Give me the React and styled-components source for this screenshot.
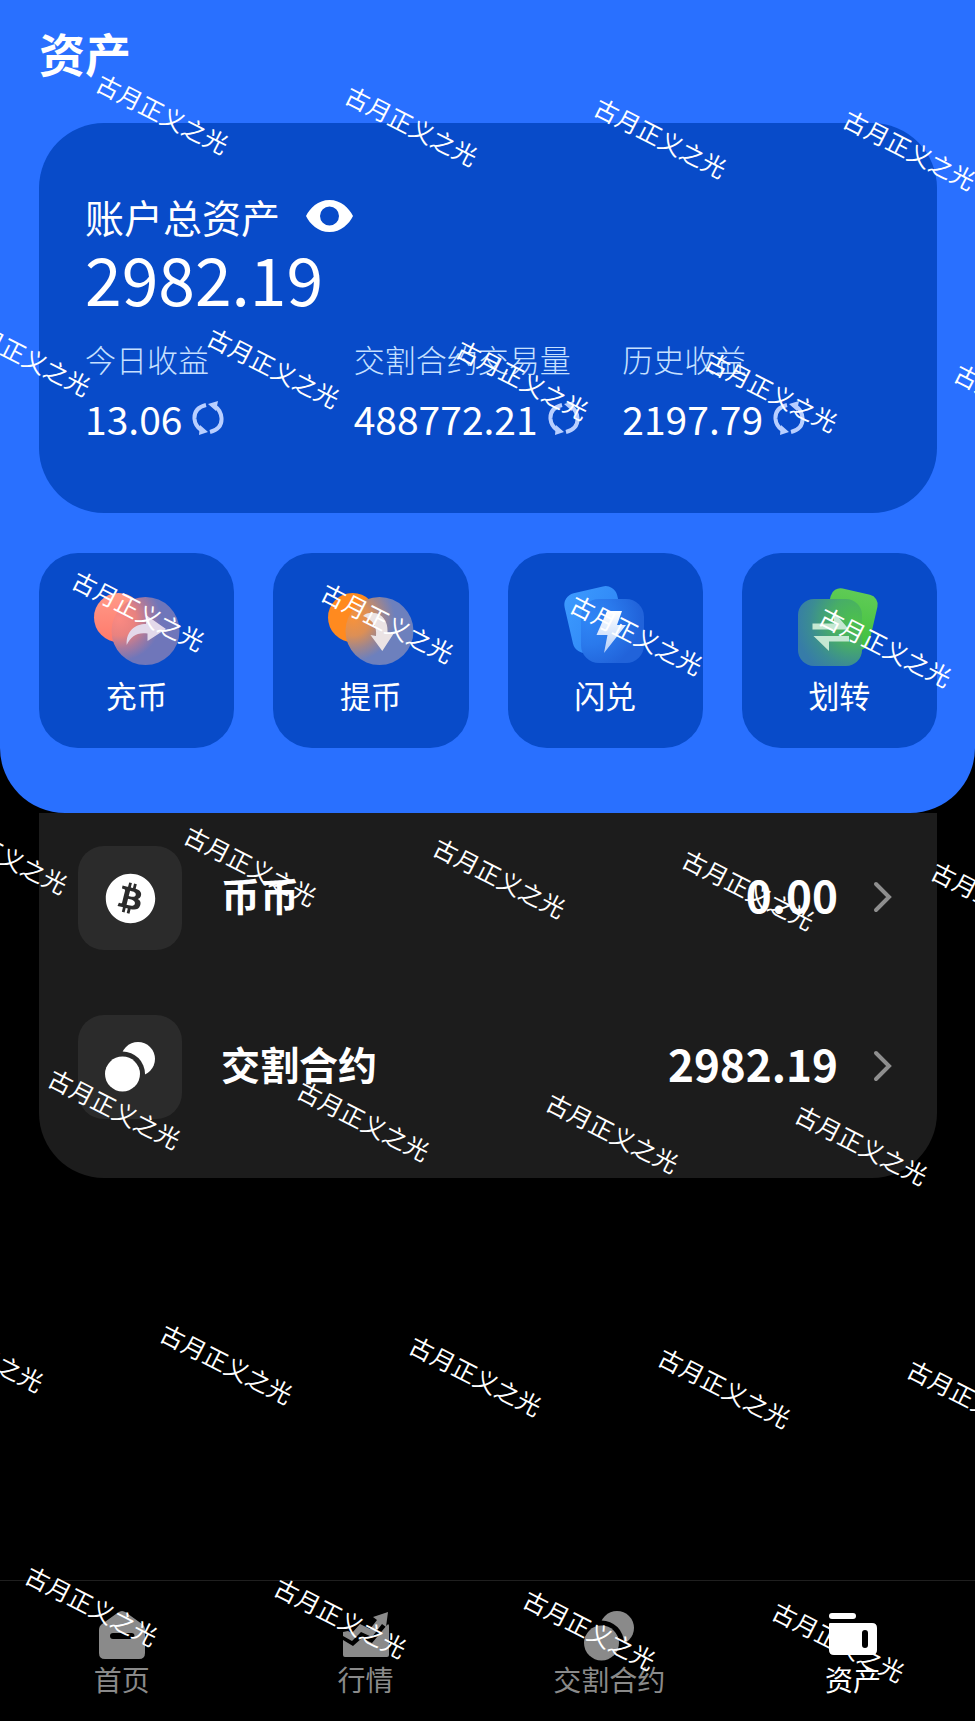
import React from "react";
import styled, { createGlobalStyle } from "styled-components";
import { FaBitcoin } from "react-icons/fa";

const stats = [
  { label: "今日收益", value: "13.06" },
  { label: "交割合约交易量", value: "488772.21" },
  { label: "历史收益", value: "2197.79" },
];

const actions = [
  { label: "充币", Icon: DepositIcon },
  { label: "提币", Icon: WithdrawIcon },
  { label: "闪兑", Icon: SwapIcon },
  { label: "划转", Icon: TransferIcon },
];

const accounts = [
  { label: "币币", value: "0.00", icon: <FaBitcoin size={51} /> },
  { label: "交割合约", value: "2982.19", icon: <ContractIcon id="row" /> },
];

const tabs = [
  { label: "首页", icon: <HomeIcon /> },
  { label: "行情", icon: <MarketIcon /> },
  { label: "交割合约", icon: <ContractIcon id="tab" /> },
  { label: "资产", icon: <WalletIcon />, active: true },
];

// first stamp of every watermark row, the rest follow to the right
const markRows = [
  { x: 104, y: 70 },
  { x: -34, y: 312 },
  { x: 80, y: 567 },
  { x: -57, y: 810 },
  { x: 56, y: 1065 },
  { x: -81, y: 1308 },
  { x: 33, y: 1562 },
];

const marks = markRows.flatMap(({ x, y }) =>
  [0, 1, 2, 3, 4].map((i) => ({ left: x + i * 249, top: y + i * 12 }))
);

export default function App() {
  return (
    <>
      <GlobalStyle />
      <Page>
        <Hero>
          <Title>资产</Title>
          <Card>
            <CardHead>
              账户总资产
              <IconBtn aria-label="隐藏资产">
                <EyeIcon />
              </IconBtn>
            </CardHead>
            <Total>2982.19</Total>
            <Stats>
              {stats.map((s) => (
                <div key={s.label}>
                  <StatLabel>{s.label}</StatLabel>
                  <StatValue>
                    {s.value}
                    <IconBtn aria-label={`刷新${s.label}`}>
                      <RefreshIcon />
                    </IconBtn>
                  </StatValue>
                </div>
              ))}
            </Stats>
          </Card>
          <Actions>
            {actions.map(({ label, Icon }) => (
              <ActionBtn key={label}>
                <Icon />
                {label}
              </ActionBtn>
            ))}
          </Actions>
        </Hero>

        <Accounts>
          {accounts.map((a) => (
            <AccountRow key={a.label} href="#">
              <IconBox>{a.icon}</IconBox>
              <AccountName>{a.label}</AccountName>
              <AccountValue>{a.value}</AccountValue>
              <ChevronIcon />
            </AccountRow>
          ))}
        </Accounts>

        <TabBar>
          {tabs.map((t) => (
            <Tab key={t.label} href="#" $active={t.active}>
              {t.icon}
              {t.label}
            </Tab>
          ))}
        </TabBar>

        <Watermark aria-hidden="true">
          {marks.map((m) => (
            <Mark key={`${m.left}-${m.top}`} style={m}>
              古月正义之光
            </Mark>
          ))}
        </Watermark>
      </Page>
    </>
  );
}

function EyeIcon() {
  return (
    <svg width="47" height="32" viewBox="0 0 47 32">
      <path
        fill="#fff"
        fillRule="evenodd"
        d="M23.500 0C35 0 43 8 47 16C43 24 35 32 23.500 32C12 32 4 24 0 16C4 8 12 0 23.500 0ZM23.500 6.500A9.500 9.500 0 1 0 23.500 25.500A9.500 9.500 0 1 0 23.500 6.500Z"
      />
    </svg>
  );
}

function RefreshIcon() {
  return (
    <svg width="32" height="34" viewBox="0 0 32 34">
      <g fill="none" stroke="#b9cfff" strokeWidth="4">
        <path d="M14 4C6 6 2 11 2.500 18C3 23 5 26 9 29" />
        <path d="M18 31C26 29 30 24 29.500 17C29 12 27 8 23 5.500" />
      </g>
      <path fill="#b9cfff" d="M16 3L26 0L24 10ZM16 31L7 34L8 24Z" />
    </svg>
  );
}

function ChevronIcon() {
  return (
    <svg width="20" height="34" viewBox="0 0 20 34">
      <path
        d="M3 3L16 16L3 29"
        fill="none"
        stroke="#8e8e8e"
        strokeWidth="4"
        strokeLinecap="round"
      />
    </svg>
  );
}

function DepositIcon() {
  return (
    <svg width="92" height="92" viewBox="0 0 92 92">
      <defs>
        <linearGradient id="depBack" x1="0" y1="0" x2="0" y2="1">
          <stop offset="0" stopColor="#ff9a88" />
          <stop offset="1" stopColor="#ff7a6c" />
        </linearGradient>
        <radialGradient
          id="depFront"
          gradientUnits="userSpaceOnUse"
          cx="28"
          cy="40"
          r="42"
        >
          <stop offset="0" stopColor="#fb8a82" />
          <stop offset="0.400" stopColor="#e9827f" />
          <stop offset="0.700" stopColor="#a87a9e" />
          <stop offset="1" stopColor="#6f76ba" />
        </radialGradient>
      </defs>
      <circle cx="27.500" cy="38.500" r="24.500" fill="url(#depBack)" />
      <circle cx="54.500" cy="52" r="34" fill="url(#depFront)" />
      <path
        fill="#e3d9ea"
        d="M55 36L75 50L56.500 62V54.500C46 53 40 57 35.700 66C35 52 44 45 55 45Z"
      />
    </svg>
  );
}

function WithdrawIcon() {
  return (
    <svg width="92" height="92" viewBox="0 0 92 92">
      <defs>
        <radialGradient
          id="witFront"
          gradientUnits="userSpaceOnUse"
          cx="28"
          cy="40"
          r="42"
        >
          <stop offset="0" stopColor="#f6923c" />
          <stop offset="0.400" stopColor="#dc8f56" />
          <stop offset="0.700" stopColor="#a0868c" />
          <stop offset="1" stopColor="#6d80bd" />
        </radialGradient>
      </defs>
      <circle cx="27.500" cy="38.500" r="24.500" fill="#ff8a1f" />
      <circle cx="54.500" cy="52" r="34" fill="url(#witFront)" />
      <path
        fill="#ebe3e4"
        d="M38 37C42 33 50 33 55 36C61 40 63 46 62.500 55L69 54L57.300 72L45.500 56L51 57C52 47 48 41 38 37Z"
      />
    </svg>
  );
}

function SwapIcon() {
  return (
    <svg width="92" height="92" viewBox="0 0 92 92">
      <defs>
        <linearGradient id="swBack" x1="0" y1="0" x2="1" y2="1">
          <stop offset="0" stopColor="#3d9bff" />
          <stop offset="1" stopColor="#2a80f2" />
        </linearGradient>
        <radialGradient
          id="swFront"
          gradientUnits="userSpaceOnUse"
          cx="30"
          cy="40"
          r="52"
        >
          <stop offset="0" stopColor="#2f86f6" />
          <stop offset="0.500" stopColor="#2a79ec" />
          <stop offset="1" stopColor="#2163da" />
        </radialGradient>
        <linearGradient id="swBolt" x1="0" y1="0" x2="0" y2="1">
          <stop offset="0" stopColor="#fff" />
          <stop offset="1" stopColor="#b4cffa" />
        </linearGradient>
      </defs>
      <rect
        x="9"
        y="10"
        width="54"
        height="61"
        rx="12"
        fill="url(#swBack)"
        transform="rotate(-13 36 40)"
      />
      <rect x="22" y="20" width="63" height="64" rx="18" fill="url(#swFront)" />
      <path fill="url(#swBolt)" d="M48 32H63L58 46H67L45 74L48.500 56H37.500Z" />
    </svg>
  );
}

function TransferIcon() {
  return (
    <svg width="92" height="92" viewBox="0 0 92 92">
      <defs>
        <linearGradient id="trBack" x1="0" y1="0" x2="0" y2="1">
          <stop offset="0" stopColor="#5fcb55" />
          <stop offset="1" stopColor="#3fc03c" />
        </linearGradient>
        <radialGradient
          id="trFront"
          gradientUnits="userSpaceOnUse"
          cx="62"
          cy="42"
          r="60"
        >
          <stop offset="0" stopColor="#4cc04c" />
          <stop offset="0.400" stopColor="#48ae66" />
          <stop offset="0.750" stopColor="#3b8c93" />
          <stop offset="1" stopColor="#367ca8" />
        </radialGradient>
      </defs>
      <rect
        x="33"
        y="12"
        width="48"
        height="56"
        rx="10"
        fill="url(#trBack)"
        transform="rotate(13 57 40)"
      />
      <rect x="5" y="20" width="64" height="67" rx="16" fill="url(#trFront)" />
      <path
        fill="#c5e8d2"
        d="M19.500 44.500H41V33L56 50.500H19.500ZM20.500 57H56V62.500H36V72Z"
      />
    </svg>
  );
}

function ContractIcon({ id }) {
  return (
    <svg width="50" height="50" viewBox="0 0 50 50" fill="currentColor">
      <mask id={`cut-${id}`}>
        <rect width="50" height="50" fill="#fff" />
        <circle cx="17.500" cy="32" r="22.500" fill="#000" />
      </mask>
      <circle cx="33" cy="17" r="17" mask={`url(#cut-${id})`} />
      <circle cx="17.500" cy="32" r="17.500" />
    </svg>
  );
}

function HomeIcon() {
  return (
    <svg width="46" height="50" viewBox="0 0 46 50" fill="currentColor">
      <path
        fillRule="evenodd"
        d="M19 1.500Q23 -1.500 27 1.500L43 13Q46 15 46 19V42Q46 48 40 48H6Q0 48 0 42V19Q0 15 3 13ZM14 22Q11 22 11 25T14 28H32.500Q35.500 28 35.500 25T32.500 22Z"
      />
    </svg>
  );
}

function MarketIcon() {
  return (
    <svg width="46" height="50" viewBox="0 0 46 50" fill="currentColor">
      <path d="M0 29L10 35L19 27L29 32L44 14Q46 12 46 15V44Q46 46 44 46H2Q0 46 0 44Z" />
      <path d="M0 21L5 20L9 22L17 13L27 18L34 9L30 6L45 1L43 16L39 13L29 26L18 21L9 30L0 25Z" />
    </svg>
  );
}

function WalletIcon() {
  return (
    <svg width="48" height="50" viewBox="0 0 48 50" fill="currentColor">
      <rect y="2" width="27" height="6" rx="3" />
      <path
        fillRule="evenodd"
        d="M1 12H43Q48 12 48 17V39Q48 44 43 44H5Q0 44 0 39V13Q0 12 1 12ZM36 19Q33 19 33 22V34Q33 37 36 37T39 34V22Q39 19 36 19Z"
      />
    </svg>
  );
}

const GlobalStyle = createGlobalStyle`
  * {
    box-sizing: border-box;
  }

  body {
    margin: 0;
    background: #000;
    color: #fff;
    font-family: "Noto Sans CJK SC", "Noto Sans", sans-serif;
  }

  button {
    border: 0;
    color: inherit;
    font-family: inherit;
    cursor: pointer;
  }

  a {
    color: inherit;
    text-decoration: none;
  }

  svg {
    display: block;
    flex-shrink: 0;
  }
`;

const Page = styled.div`
  position: relative;
  min-height: 100vh;
  display: flex;
  flex-direction: column;
`;

const Hero = styled.header`
  padding: 18px 38px 65px 39px;
  background: #2970ff;
  border-radius: 0 0 65px 65px;
`;

const Title = styled.h1`
  margin: 0 0 37px;
  font-size: 46px;
  line-height: 68px;
  font-weight: 700;
`;

const Card = styled.section`
  padding: 70px 46px 72px;
  background: #084bc9;
  border-radius: 65px;
`;

const CardHead = styled.div`
  display: flex;
  align-items: center;
  gap: 26px;
  font-size: 39px;
  line-height: 46px;
`;

const IconBtn = styled.button`
  padding: 0;
  background: none;
`;

const Total = styled.div`
  font-size: 66px;
  line-height: 76px;
`;

const Stats = styled.div`
  display: grid;
  grid-template-columns: repeat(3, 1fr);
  margin-top: 21px;
`;

const StatLabel = styled.div`
  font-size: 31px;
  line-height: 46px;
  font-weight: 300;
  color: #c6e0ff;
  white-space: nowrap;
`;

const StatValue = styled.div`
  display: flex;
  align-items: center;
  gap: 10px;
  margin-top: 13px;
  font-size: 39px;
  line-height: 46px;
`;

const Actions = styled.div`
  display: grid;
  grid-template-columns: repeat(4, 1fr);
  gap: 39px;
  margin-top: 40px;
`;

const ActionBtn = styled.button`
  display: flex;
  flex-direction: column;
  align-items: center;
  padding: 26px 0 29px;
  background: #084bc9;
  border-radius: 39px;
  font-size: 31px;
  line-height: 48px;
`;

const Accounts = styled.main`
  display: flex;
  flex-direction: column;
  gap: 65px;
  margin: 0 38px 0 39px;
  padding: 33px 44px 59px 39px;
  background: #1c1c1c;
  border-radius: 0 0 65px 65px;
`;

const AccountRow = styled.a`
  display: flex;
  align-items: center;
  font-weight: 700;
`;

const IconBox = styled.span`
  display: flex;
  align-items: center;
  justify-content: center;
  width: 104px;
  height: 104px;
  background: #2b2b2b;
  border-radius: 26px;
`;

const AccountName = styled.span`
  flex: 1;
  margin-left: 39px;
  padding-bottom: 8px;
  font-size: 39px;
`;

const AccountValue = styled.span`
  margin-right: 35px;
  padding-bottom: 8px;
  font-size: 44px;
`;

const TabBar = styled.nav`
  display: grid;
  grid-template-columns: repeat(4, 1fr);
  margin-top: auto;
  padding: 30px 0 24px;
  border-top: 1px solid #1f1f1f;
`;

const Tab = styled.a`
  display: flex;
  flex-direction: column;
  align-items: center;
  font-size: 28px;
  line-height: 36px;
  color: ${({ $active }) => ($active ? "#fff" : "#8a8a8a")};
`;

const Watermark = styled.div`
  position: absolute;
  inset: 0;
  overflow: hidden;
  pointer-events: none;
`;

const Mark = styled.span`
  position: absolute;
  font-size: 24px;
  line-height: 24px;
  font-weight: 400;
  white-space: nowrap;
  transform: rotate(27deg);
  transform-origin: 0 0;
`;
